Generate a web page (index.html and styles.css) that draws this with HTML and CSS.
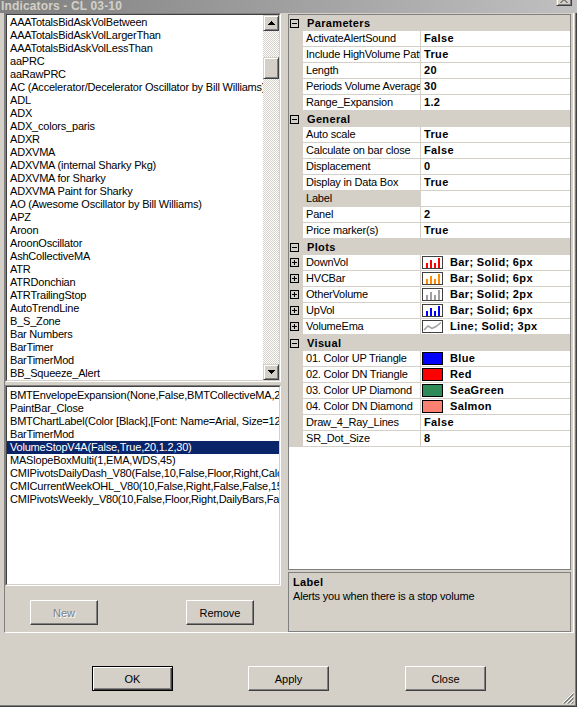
FILE: index.html
```html
<!DOCTYPE html>
<html>
<head lang="en">
  <meta charset="UTF-8">
  <title>Indicators - CL 03-10</title>
  <link rel="stylesheet" href="styles.css">
</head>
<body>
<div class="window">
  <div class="caption">
    <span class="caption-text">Indicators - CL 03-10</span>
    <span class="caption-close">
      <svg width="8" height="7" viewBox="0 0 8 7"><path d="M0 0h2v1h1v1h2V1h1V0h2v1H7v1H6v1H5v1h1v1h1v1h1v1H6V6H5V5H3v1H2v1H0V6h1V5h1V4h1V3H2V2H1V1H0z"/></svg>
    </span>
  </div>

  <div class="split">
    <!-- indicators available / applied -->
    <div class="left">
      <div class="listbox all">
        <div class="listbox-in">
          <ul class="items">
            <li>AAATotalsBidAskVolBetween</li>
            <li>AAATotalsBidAskVolLargerThan</li>
            <li>AAATotalsBidAskVolLessThan</li>
            <li>aaPRC</li>
            <li>aaRawPRC</li>
            <li>AC (Accelerator/Decelerator Oscillator by Bill Williams)</li>
            <li>ADL</li>
            <li>ADX</li>
            <li>ADX_colors_paris</li>
            <li>ADXR</li>
            <li>ADXVMA</li>
            <li>ADXVMA (internal Sharky Pkg)</li>
            <li>ADXVMA for Sharky</li>
            <li>ADXVMA Paint for Sharky</li>
            <li>AO (Awesome Oscillator by Bill Williams)</li>
            <li>APZ</li>
            <li>Aroon</li>
            <li>AroonOscillator</li>
            <li>AshCollectiveMA</li>
            <li>ATR</li>
            <li>ATRDonchian</li>
            <li>ATRTrailingStop</li>
            <li>AutoTrendLine</li>
            <li>B_S_Zone</li>
            <li>Bar Numbers</li>
            <li>BarTimer</li>
            <li>BarTimerMod</li>
            <li>BB_Squeeze_Alert</li>
          </ul>
          <div class="vscroll">
            <span class="sb-btn"><svg width="7" height="4" viewBox="0 0 7 4"><path d="M3 0h1v1h1v1h1v1h1v1H0V3h1V2h1V1h1z"/></svg></span>
            <span class="sb-track"><span class="sb-thumb"></span></span>
            <span class="sb-btn"><svg width="7" height="4" viewBox="0 0 7 4"><path d="M0 0h7v1H6v1H5v1H4v1H3V3H2V2H1V1H0z"/></svg></span>
          </div>
        </div>
      </div>

      <div class="listbox applied">
        <div class="listbox-in">
          <ul class="items">
            <li>BMTEnvelopeExpansion(None,False,BMTCollectiveMA,20,0.5)</li>
            <li>PaintBar_Close</li>
            <li>BMTChartLabel(Color [Black],[Font: Name=Arial, Size=12, Units=Point])</li>
            <li>BarTimerMod</li>
            <li class="selected">VolumeStopV4A(False,True,20,1.2,30)</li>
            <li>MASlopeBoxMulti(1,EMA,WDS,45)</li>
            <li>CMIPivotsDailyDash_V80(False,10,False,Floor,Right,Calculated)</li>
            <li>CMICurrentWeekOHL_V80(10,False,Right,False,False,15)</li>
            <li>CMIPivotsWeekly_V80(10,False,Floor,Right,DailyBars,False)</li>
          </ul>
        </div>
      </div>

      <div class="left-buttons">
        <button class="btn" disabled>New</button>
        <button class="btn">Remove</button>
      </div>
    </div>

    <!-- property grid of the selected indicator -->
    <div class="right">
      <div class="grid">
        <div class="cat"><span class="glyph"></span>Parameters</div>
        <div class="prop"><span class="gutter"></span><span class="name">ActivateAlertSound</span><span class="value">False</span></div>
        <div class="prop"><span class="gutter"></span><span class="name">Include HighVolume Pattern</span><span class="value">True</span></div>
        <div class="prop"><span class="gutter"></span><span class="name">Length</span><span class="value">20</span></div>
        <div class="prop"><span class="gutter"></span><span class="name">Periods Volume Average</span><span class="value">30</span></div>
        <div class="prop"><span class="gutter"></span><span class="name">Range_Expansion</span><span class="value">1.2</span></div>

        <div class="cat"><span class="glyph"></span>General</div>
        <div class="prop"><span class="gutter"></span><span class="name">Auto scale</span><span class="value">True</span></div>
        <div class="prop"><span class="gutter"></span><span class="name">Calculate on bar close</span><span class="value">False</span></div>
        <div class="prop"><span class="gutter"></span><span class="name">Displacement</span><span class="value">0</span></div>
        <div class="prop"><span class="gutter"></span><span class="name">Display in Data Box</span><span class="value">True</span></div>
        <div class="prop current"><span class="gutter"></span><span class="name">Label</span><span class="value"></span></div>
        <div class="prop"><span class="gutter"></span><span class="name">Panel</span><span class="value">2</span></div>
        <div class="prop"><span class="gutter"></span><span class="name">Price marker(s)</span><span class="value">True</span></div>

        <div class="cat"><span class="glyph"></span>Plots</div>
        <div class="prop"><span class="gutter"><span class="glyph plus"></span></span><span class="name">DownVol</span>
          <span class="value icon"><svg class="plot" width="21" height="13" viewBox="0 0 21 13"><rect x=".5" y=".5" width="20" height="12" fill="#fff" stroke="#404040"/><path fill="#f00" d="M4 7h2v5H4zM8 4h2v8H8zM12 7h2v5h-2zM16 2h2v10h-2z"/></svg>Bar; Solid; 6px</span></div>
        <div class="prop"><span class="gutter"><span class="glyph plus"></span></span><span class="name">HVCBar</span>
          <span class="value icon"><svg class="plot" width="21" height="13" viewBox="0 0 21 13"><rect x=".5" y=".5" width="20" height="12" fill="#fff" stroke="#404040"/><path fill="#ff8c00" d="M4 7h2v5H4zM8 4h2v8H8zM12 7h2v5h-2zM16 2h2v10h-2z"/></svg>Bar; Solid; 6px</span></div>
        <div class="prop"><span class="gutter"><span class="glyph plus"></span></span><span class="name">OtherVolume</span>
          <span class="value icon"><svg class="plot" width="21" height="13" viewBox="0 0 21 13"><rect x=".5" y=".5" width="20" height="12" fill="#fff" stroke="#404040"/><path fill="#a0a0a0" d="M4 7h2v5H4zM8 4h2v8H8zM12 7h2v5h-2zM16 2h2v10h-2z"/></svg>Bar; Solid; 2px</span></div>
        <div class="prop"><span class="gutter"><span class="glyph plus"></span></span><span class="name">UpVol</span>
          <span class="value icon"><svg class="plot" width="21" height="13" viewBox="0 0 21 13"><rect x=".5" y=".5" width="20" height="12" fill="#fff" stroke="#404040"/><path fill="#00f" d="M4 7h2v5H4zM8 4h2v8H8zM12 7h2v5h-2zM16 2h2v10h-2z"/></svg>Bar; Solid; 6px</span></div>
        <div class="prop"><span class="gutter"><span class="glyph plus"></span></span><span class="name">VolumeEma</span>
          <span class="value icon"><svg class="plot" width="21" height="13" viewBox="0 0 21 13"><rect x=".5" y=".5" width="20" height="12" fill="#fff" stroke="#404040"/><polyline points="2,10 6,6 10,8.5 14,6.5 19,2.5" fill="none" stroke="#a0a0a0" stroke-width="1.5"/></svg>Line; Solid; 3px</span></div>

        <div class="cat"><span class="glyph"></span>Visual</div>
        <div class="prop"><span class="gutter"></span><span class="name">01. Color UP Triangle</span><span class="value icon"><span class="swatch blue"></span>Blue</span></div>
        <div class="prop"><span class="gutter"></span><span class="name">02. Color DN Triangle</span><span class="value icon"><span class="swatch red"></span>Red</span></div>
        <div class="prop"><span class="gutter"></span><span class="name">03. Color UP Diamond</span><span class="value icon"><span class="swatch seagreen"></span>SeaGreen</span></div>
        <div class="prop"><span class="gutter"></span><span class="name">04. Color DN Diamond</span><span class="value icon"><span class="swatch salmon"></span>Salmon</span></div>
        <div class="prop"><span class="gutter"></span><span class="name">Draw_4_Ray_Lines</span><span class="value">False</span></div>
        <div class="prop"><span class="gutter"></span><span class="name">SR_Dot_Size</span><span class="value">8</span></div>
      </div>

      <div class="help">
        <b>Label</b>
        <p>Alerts you when there is a stop volume</p>
      </div>
    </div>
  </div>

  <div class="footer">
    <button class="btn default">OK</button>
    <button class="btn">Apply</button>
    <button class="btn close">Close</button>
    <svg class="grip" width="12" height="12" viewBox="0 0 12 12">
      <path d="M11.5 .5l-11 11M11.5 4.5l-7 7M11.5 8.5l-3 3" stroke="#fff"/>
      <path d="M11.5 1.5l-10 10M11.5 2.5l-9 9M11.5 5.5l-6 6M11.5 6.5l-5 5M11.5 9.5l-2 2M11.5 10.5l-1 1" stroke="#808080"/>
    </svg>
  </div>
</div>
</body>
</html>
```

FILE: styles.css
```css
* {
  margin: 0;
  padding: 0;
  box-sizing: border-box;
}

ul {
  list-style: none;
}

body {
  background-color: #d4d0c8;
  font: 11px "Liberation Sans", Arial, sans-serif;
  color: #000;
}

.window {
  width: 577px;
  height: 707px;
  display: flex;
  flex-direction: column;
  background-color: #d4d0c8;
  box-shadow: inset -1px -1px #404040, inset -2px -2px #808080;
  overflow: hidden;
}

/* title bar (inactive) */
.caption {
  height: 13px;
  flex: none;
  display: flex;
  justify-content: space-between;
  padding: 0 5px 0 1px;
  background: linear-gradient(to right, #808080, #c0c0c0);
  overflow: hidden;
}

.caption-text {
  font-weight: bold;
  font-size: 12px;
  line-height: 12px;
  letter-spacing: .15px;
  color: #d4d0c8;
  white-space: nowrap;
}

.caption-close {
  width: 16px;
  height: 14px;
  margin-top: -8px;
  display: flex;
  align-items: center;
  justify-content: center;
  background-color: #d4d0c8;
  border: 1px solid;
  border-color: #d4d0c8 #404040 #404040 #d4d0c8;
  box-shadow: inset 1px 1px #fff, inset -1px -1px #808080;
  fill: #808080;
}

/* the sunken area holding both panes */
.split {
  height: 620px;
  flex: none;
  display: flex;
  margin: 0 3px 0 4px;
  border-left: 1px solid #808080;
  border-right: 1px solid #fff;
  border-bottom: 1px solid #fff;
}

.left {
  width: 276px;
  display: flex;
  flex-direction: column;
}

.right {
  width: 283px;
  margin-left: 7px;
  padding-top: 1px;
  display: flex;
  flex-direction: column;
}

/* list boxes */
.listbox {
  border: 1px solid;
  border-color: #808080 #fff #fff #808080;
}

.listbox.all {
  height: 369px;
  margin-bottom: 3px;
}

.listbox.applied {
  height: 201px;
}

.listbox-in {
  height: 100%;
  display: flex;
  background-color: #fff;
  border: 1px solid;
  border-color: #404040 #d4d0c8 #d4d0c8 #404040;
  overflow: hidden;
}

.items {
  flex: 1;
  min-width: 0;
  padding-top: 1px;
  overflow: hidden;
}

.applied .items {
  padding-top: 2px;
}

.items li {
  height: 13px;
  line-height: 13px;
  padding-left: 3px;
  white-space: nowrap;
  letter-spacing: -.2px;
}

.items li.selected {
  background-color: #0a246a;
  color: #fff;
}

/* vertical scrollbar */
.vscroll {
  width: 16px;
  flex: none;
  display: flex;
  flex-direction: column;
}

.sb-btn,
.sb-thumb {
  background-color: #d4d0c8;
  border: 1px solid;
  border-color: #d4d0c8 #404040 #404040 #d4d0c8;
  box-shadow: inset 1px 1px #fff, inset -1px -1px #808080;
}

.sb-btn {
  height: 16px;
  flex: none;
  display: flex;
  align-items: center;
  justify-content: center;
}

.sb-track {
  flex: 1;
  background: repeating-conic-gradient(#fff 0 25%, #d4d0c8 0 50%) 0 0 / 2px 2px;
}

.sb-thumb {
  display: block;
  height: 22px;
  margin-top: 26px;
}

/* push buttons */
.btn {
  font: 11px "Liberation Sans", Arial, sans-serif;
  color: #000;
  background-color: #d4d0c8;
  border: 1px solid;
  border-color: #fff #404040 #404040 #fff;
  box-shadow: inset -1px -1px #808080;
  height: 25px;
}

.btn:disabled {
  color: #808080;
  text-shadow: 1px 1px #fff;
}

.btn.default {
  border-color: #000;
  box-shadow: inset 1px 1px #fff, inset -1px -1px #404040, inset -2px -2px #808080;
}

.left-buttons {
  display: flex;
  gap: 88px;
  margin-top: 14px;
  padding-left: 25px;
}

.left-buttons .btn {
  width: 68px;
}

/* property grid */
.grid {
  height: 556px;
  margin-bottom: 2px;
  border: 1px solid #808080;
  background-color: #fff;
  overflow: hidden;
}

.cat {
  height: 16px;
  display: flex;
  align-items: center;
  padding-left: 1px;
  background-color: #d4d0c8;
  font-weight: bold;
  letter-spacing: .35px;
}

.cat .glyph {
  margin-right: 8px;
}

.glyph {
  position: relative;
  display: block;
  width: 9px;
  height: 9px;
  border: 1px solid #000;
}

.glyph::before {
  content: "";
  position: absolute;
  left: 1px;
  top: 3px;
  width: 5px;
  height: 1px;
  background-color: #000;
}

.glyph.plus::after {
  content: "";
  position: absolute;
  left: 3px;
  top: 1px;
  width: 1px;
  height: 5px;
  background-color: #000;
}

.prop {
  height: 16px;
  display: flex;
}

.prop .gutter {
  width: 14px;
  flex: none;
  padding: 3px 0 0 1px;
  background-color: #d4d0c8;
}

.prop .name,
.prop .value {
  line-height: 15px;
  border-bottom: 1px solid #d4d0c8;
  white-space: nowrap;
  overflow: hidden;
}

.prop .name {
  width: 118px;
  flex: none;
  padding-left: 3px;
  border-right: 1px solid #d4d0c8;
  letter-spacing: -.2px;
}

.prop.current .name {
  background-color: #d4d0c8;
}

.prop .value {
  flex: 1;
  padding-left: 3px;
  font-weight: bold;
  letter-spacing: .35px;
}

.prop .value.icon {
  display: flex;
  align-items: center;
  padding-left: 1px;
}

.plot,
.swatch {
  flex: none;
  margin-right: 7px;
}

.swatch {
  width: 21px;
  height: 13px;
  border: 1px solid #000;
}

.swatch.blue { background-color: #0000ff; }
.swatch.red { background-color: #ff0000; }
.swatch.seagreen { background-color: #2e8b57; }
.swatch.salmon { background-color: #fa8072; }

/* description under the grid */
.help {
  height: 60px;
  border: 1px solid #808080;
  padding: 2px 0 0 4px;
  line-height: 14px;
}

.help b {
  letter-spacing: .35px;
}

.help p {
  letter-spacing: -.2px;
}

/* dialog buttons */
.footer {
  position: relative;
  flex: 1;
  display: flex;
  align-items: flex-start;
  gap: 75px;
  padding: 33px 0 0 92px;
}

.footer .btn {
  width: 81px;
}

.footer .close {
  margin-left: 1px;
}

.grip {
  position: absolute;
  right: 3px;
  bottom: 3px;
}
```
